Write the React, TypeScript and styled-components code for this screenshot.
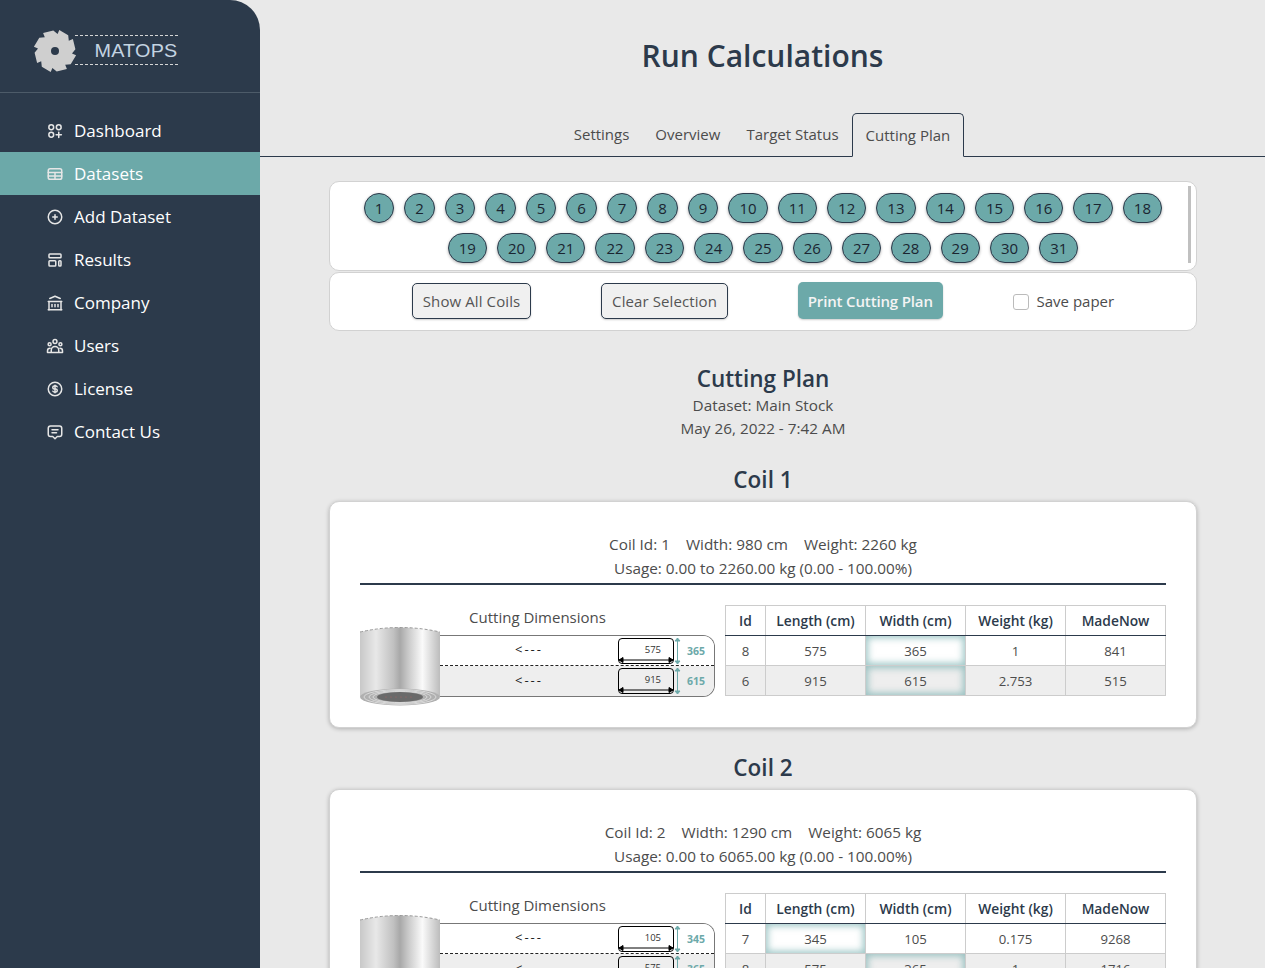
import styled, { createGlobalStyle } from "styled-components";
import { TbBuildingBank, TbCirclePlus, TbCoin, TbMessage2 } from "react-icons/tb";

const navy = "#2c3a4b";
const teal = "#6ca9a9";
const text = "#4c4c4c";

const GlobalStyle = createGlobalStyle`
  html, body {
    margin: 0;
    height: 100%;
    overflow: hidden;
  }
  body {
    background: #e9e9e9;
    font-family: "Open Sans", "Noto Sans", sans-serif;
    font-size: 15px;
    color: ${text};
  }
`;

function bladePath() {
  const cx = 22;
  const cy = 22;
  const teeth = 8;
  let d = "";
  for (let i = 0; i < teeth; i++) {
    const a = (i * 2 * Math.PI) / teeth + 0.2;
    const b = a + 0.5;
    const c = a + (2 * Math.PI) / teeth - 0.05;
    const p1 = [cx + 21.5 * Math.cos(a), cy + 21.5 * Math.sin(a)];
    const p2 = [cx + 20.5 * Math.cos(b), cy + 20.5 * Math.sin(b)];
    const p3 = [cx + 17.2 * Math.cos(c), cy + 17.2 * Math.sin(c)];
    d += `${i === 0 ? "M" : "L"}${p1[0].toFixed(1)} ${p1[1].toFixed(1)}L${p2[0].toFixed(1)} ${p2[1].toFixed(1)}L${p3[0].toFixed(1)} ${p3[1].toFixed(1)}`;
  }
  return d + "Z";
}

const iconProps = {
  width: 18,
  height: 18,
  viewBox: "0 0 24 24",
  fill: "none",
  stroke: "currentColor",
  strokeWidth: 2,
  strokeLinecap: "round" as const,
  strokeLinejoin: "round" as const,
};

function AppsIcon() {
  return (
    <svg {...iconProps}>
      <circle cx="7" cy="7" r="3.2" />
      <circle cx="17" cy="7" r="3.2" />
      <circle cx="7" cy="17" r="3.2" />
      <path d="M17 13.5v7M13.5 17h7" />
    </svg>
  );
}

function TableIcon() {
  return (
    <svg {...iconProps}>
      <rect x="3" y="5" width="18" height="14" rx="2.5" />
      <path d="M3 10h18M3 14.5h18M12 10v9" />
    </svg>
  );
}

function LayoutIcon() {
  return (
    <svg {...iconProps}>
      <rect x="4" y="4" width="16" height="5" rx="1" />
      <rect x="4" y="13" width="9" height="7" rx="1" />
      <rect x="17" y="13" width="3" height="7" rx="1" />
    </svg>
  );
}

function UsersIcon() {
  return (
    <svg {...iconProps}>
      <circle cx="12" cy="6" r="2.6" />
      <circle cx="4.8" cy="9.5" r="2" />
      <circle cx="19.2" cy="9.5" r="2" />
      <path d="M7 20.5v-3a5 5 0 0 1 10 0v3M2 20.5v-2a3.4 3.4 0 0 1 3.4-3.4M22 20.5v-2a3.4 3.4 0 0 0-3.4-3.4M2 20.5h20" />
    </svg>
  );
}

const navItems = [
  { label: "Dashboard", icon: <AppsIcon /> },
  { label: "Datasets", icon: <TableIcon />, active: true },
  { label: "Add Dataset", icon: <TbCirclePlus size={18} /> },
  { label: "Results", icon: <LayoutIcon /> },
  { label: "Company", icon: <TbBuildingBank size={18} /> },
  { label: "Users", icon: <UsersIcon /> },
  { label: "License", icon: <TbCoin size={18} /> },
  { label: "Contact Us", icon: <TbMessage2 size={18} /> },
];

const tabs = ["Settings", "Overview", "Target Status", "Cutting Plan"];
const coilNumbers = Array.from({ length: 31 }, (_, i) => i + 1);

const coils = [
  {
    id: 1,
    width: 980,
    weight: 2260,
    usage: "Usage: 0.00 to 2260.00 kg (0.00 - 100.00%)",
    rows: [
      { id: 8, length: 575, width: 365, weight: "1", made: 841, mark: "width" },
      { id: 6, length: 915, width: 615, weight: "2.753", made: 515, mark: "width" },
    ],
    cuts: [
      { top: 575, side: 365 },
      { top: 915, side: 615 },
    ],
  },
  {
    id: 2,
    width: 1290,
    weight: 6065,
    usage: "Usage: 0.00 to 6065.00 kg (0.00 - 100.00%)",
    rows: [
      { id: 7, length: 345, width: 105, weight: "0.175", made: 9268, mark: "length" },
      { id: 8, length: 575, width: 365, weight: "1", made: 1716, mark: "width" },
    ],
    cuts: [
      { top: 105, side: 345 },
      { top: 575, side: 365 },
    ],
  },
];

function Roll({ id }: { id: number }) {
  const dots = [386, 391, 396, 401, 406, 411];
  return (
    <RollSvg viewBox="360 627 80 80" width="80" height="80">
      <defs>
        <linearGradient id={`roll-${id}`} x1="0" x2="1" y1="0" y2="0">
          <stop offset="0" stopColor="#c8c8c8" />
          <stop offset="0.2" stopColor="#e8e8e8" />
          <stop offset="0.42" stopColor="#c0c0c0" />
          <stop offset="0.5" stopColor="#a8a8a8" />
          <stop offset="0.6" stopColor="#c8c8c8" />
          <stop offset="0.78" stopColor="#fafafa" />
          <stop offset="1" stopColor="#bcbcbc" />
        </linearGradient>
      </defs>
      <path d="M360 632Q400 623 440 632V697H360Z" fill={`url(#roll-${id})`} />
      <path d="M360 632Q400 623 440 632" fill="none" stroke="#999" strokeDasharray="3 2" />
      <ellipse cx="400" cy="697" rx="40" ry="8.5" fill="#b0b0b0" />
      <ellipse cx="400" cy="697" rx="36" ry="7.4" fill="none" stroke="#dadada" />
      <ellipse cx="400" cy="697" rx="31" ry="6.4" fill="none" stroke="#dadada" />
      <ellipse cx="400" cy="697" rx="27" ry="5.6" fill="none" stroke="#dadada" />
      <ellipse cx="400" cy="697" rx="23" ry="5" fill="#6a6a6a" />
      {dots.map((x) => (
        <circle key={x} cx={x} cy="697" r="0.6" fill="#a66" />
      ))}
    </RollSvg>
  );
}

function CutPiece({ top, side }: { top: number; side: number }) {
  return (
    <>
      <Piece>
        <PieceSize>{top}</PieceSize>
        <WidthArrow viewBox="0 0 56 6" width="56" height="6">
          <path d="M1 3H55M1 3l4-2.5v5ZM55 3l-4-2.5v5Z" stroke="#000" fill="#000" />
        </WidthArrow>
      </Piece>
      <svg viewBox="0 0 7 28" width="7" height="28">
        <path d="M3.5 1V27M3.5 1L1 4h5ZM3.5 27L1 24h5Z" stroke={teal} fill={teal} />
      </svg>
      <SideSize>{side}</SideSize>
    </>
  );
}

export default function App() {
  return (
    <Page>
      <GlobalStyle />
      <Sidebar>
        <LogoBar>
          <svg viewBox="0 0 44 44" width="44" height="44">
            <path d={bladePath()} fill="#cfcfcf" />
            <circle cx="22" cy="22" r="4" fill={navy} />
          </svg>
          <LogoText>
            <LogoWord>MATOPS</LogoWord>
          </LogoText>
        </LogoBar>
        <Nav>
          {navItems.map((item) => (
            <NavItem key={item.label} $active={item.active}>
              <NavIcon>{item.icon}</NavIcon>
              {item.label}
            </NavItem>
          ))}
        </Nav>
      </Sidebar>
      <Main>
        <Title>Run Calculations</Title>
        <TabBar>
          {tabs.map((tab) => (
            <Tab key={tab} $active={tab === "Cutting Plan"}>
              {tab}
            </Tab>
          ))}
        </TabBar>
        <Content>
          <CoilPicker>
            {coilNumbers.map((n) => (
              <CoilBubble key={n} $wide={n > 9}>
                {n}
              </CoilBubble>
            ))}
            <ScrollThumb />
          </CoilPicker>
          <Actions>
            <OutlineButton>Show All Coils</OutlineButton>
            <OutlineButton>Clear Selection</OutlineButton>
            <PrintButton>Print Cutting Plan</PrintButton>
            <SaveLabel>
              <CheckBox />
              Save paper
            </SaveLabel>
          </Actions>
          <PlanHead>
            <PlanTitle>Cutting Plan</PlanTitle>
            <PlanLine>Dataset: Main Stock</PlanLine>
            <PlanLine>May 26, 2022 - 7:42 AM</PlanLine>
          </PlanHead>
          {coils.map((coil) => (
            <section key={coil.id}>
              <CoilTitle>Coil {coil.id}</CoilTitle>
              <CoilCard>
                <CoilInfo>
                  <div>
                    <InfoPart>Coil Id: {coil.id}</InfoPart>
                    <InfoPart>Width: {coil.width} cm</InfoPart>
                    <InfoPart>Weight: {coil.weight} kg</InfoPart>
                  </div>
                  <div>{coil.usage}</div>
                </CoilInfo>
                <CoilBody>
                  <Diagram>
                    <DiagramLabel>Cutting Dimensions</DiagramLabel>
                    <DiagramRow>
                      <Roll id={coil.id} />
                      <Strip>
                        {coil.cuts.map((cut, i) => (
                          <StripRow key={i} $shaded={i % 2 === 1}>
                            <Direction>{"<---"}</Direction>
                            <CutPiece top={cut.top} side={cut.side} />
                          </StripRow>
                        ))}
                      </Strip>
                    </DiagramRow>
                  </Diagram>
                  <Table>
                    <thead>
                      <tr>
                        <Th $w={40}>Id</Th>
                        <Th $w={100}>Length (cm)</Th>
                        <Th $w={100}>Width (cm)</Th>
                        <Th $w={100}>Weight (kg)</Th>
                        <Th $w={100}>MadeNow</Th>
                      </tr>
                    </thead>
                    <tbody>
                      {coil.rows.map((row, i) => (
                        <tr key={i}>
                          <Td $shaded={i % 2 === 1}>{row.id}</Td>
                          <Td $shaded={i % 2 === 1} $mark={row.mark === "length"}>
                            {row.length}
                          </Td>
                          <Td $shaded={i % 2 === 1} $mark={row.mark === "width"}>
                            {row.width}
                          </Td>
                          <Td $shaded={i % 2 === 1}>{row.weight}</Td>
                          <Td $shaded={i % 2 === 1}>{row.made}</Td>
                        </tr>
                      ))}
                    </tbody>
                  </Table>
                </CoilBody>
              </CoilCard>
            </section>
          ))}
        </Content>
      </Main>
    </Page>
  );
}

const Page = styled.div`
  display: flex;
  height: 100vh;
  overflow: hidden;
`;

const Sidebar = styled.aside`
  flex: 0 0 260px;
  background: ${navy};
  border-top-right-radius: 30px;
`;

const LogoBar = styled.div`
  display: flex;
  align-items: center;
  height: 93px;
  padding: 9px 0 0 33px;
  box-sizing: border-box;
  border-bottom: 1px solid #4d5b69;
`;

const LogoText = styled.div`
  width: 103px;
  height: 28px;
  margin: -2px 0 0 -2px;
  border-top: 1px dashed #d6d6d6;
  border-bottom: 1px dashed #d6d6d6;
  text-align: right;
  font-family: "Liberation Sans", Arial, sans-serif;
  font-size: 18px;
  line-height: 30px;
  color: #c4d4e2;
`;

const LogoWord = styled.span`
  display: inline-block;
  letter-spacing: 0.2px;
  transform: scaleX(1.1);
  transform-origin: right center;
`;

const Nav = styled.nav`
  display: flex;
  flex-direction: column;
  padding-top: 16px;
`;

const NavItem = styled.div<{ $active?: boolean }>`
  display: flex;
  align-items: center;
  height: 43px;
  padding-left: 46px;
  font-size: 17px;
  color: #fff;
  background: ${(p) => (p.$active ? teal : "transparent")};
`;

const NavIcon = styled.span`
  display: flex;
  width: 18px;
  margin-right: 10px;
  color: #e6e6e6;
`;

const Main = styled.main`
  flex: 1;
  min-width: 0;
`;

const Title = styled.h1`
  margin: 36px 0 37px;
  font-size: 30px;
  line-height: 40px;
  font-weight: 600;
  text-align: center;
  color: ${navy};
`;

const TabBar = styled.div`
  display: flex;
  justify-content: center;
  align-items: flex-end;
  height: 43px;
  border-bottom: 1px solid ${navy};
`;

const Tab = styled.div<{ $active?: boolean }>`
  position: relative;
  top: 1px;
  height: 42px;
  padding: 0 ${(p) => (p.$active ? "13px" : "12px")};
  border: 1px solid ${(p) => (p.$active ? navy : "transparent")};
  border-bottom: 1px solid ${(p) => (p.$active ? "#e9e9e9" : "transparent")};
  border-radius: 5px 5px 0 0;
  line-height: ${(p) => (p.$active ? "42px" : "41px")};
`;

const Content = styled.div`
  width: 868px;
  margin: 24px 0 0 69px;
`;

const Panel = styled.div`
  background: #fff;
  border: 1px solid #d2d2d2;
  border-radius: 10px;
  box-sizing: border-box;
`;

const CoilPicker = styled(Panel)`
  position: relative;
  display: flex;
  flex-wrap: wrap;
  align-content: flex-start;
  justify-content: center;
  gap: 10px;
  height: 90px;
  padding: 11px 30px 0;
`;

const CoilBubble = styled.div<{ $wide?: boolean }>`
  display: flex;
  align-items: center;
  justify-content: center;
  width: ${(p) => (p.$wide ? "39.3px" : "30.5px")};
  height: 30px;
  box-sizing: border-box;
  background: ${teal};
  border: 1px solid ${navy};
  border-radius: 15px;
  box-shadow: 0 1px 3px rgba(0, 0, 0, 0.3);
  color: #1b2531;
`;

const ScrollThumb = styled.div`
  position: absolute;
  top: 4px;
  right: 5px;
  bottom: 7px;
  width: 3px;
  background: #c0c0c0;
`;

const Actions = styled(Panel)`
  display: flex;
  align-items: center;
  justify-content: space-evenly;
  height: 59px;
  margin-top: 1px;
  padding: 0 12px 2px;
`;

const OutlineButton = styled.button`
  height: 36px;
  padding: 0 10px;
  font: inherit;
  letter-spacing: 0.1px;
  color: #555;
  background: #f0f0f0;
  border: 1px solid ${navy};
  border-radius: 5px;
  box-shadow: 0 1px 2px rgba(0, 0, 0, 0.2);
`;

const PrintButton = styled.button`
  height: 37px;
  padding: 0 10px;
  font: inherit;
  font-weight: 600;
  letter-spacing: -0.15px;
  color: #f4f4f4;
  background: ${teal};
  border: 0;
  border-radius: 5px;
  box-shadow: 0 1px 2px rgba(0, 0, 0, 0.2);
`;

const SaveLabel = styled.label`
  display: flex;
  align-items: center;
  gap: 8px;
`;

const CheckBox = styled.span`
  width: 16px;
  height: 16px;
  box-sizing: border-box;
  border: 1px solid #bbb;
  border-radius: 3px;
  margin-top: 2px;
`;

const PlanHead = styled.div`
  margin-top: 33px;
  text-align: center;
`;

const PlanTitle = styled.h2`
  margin: 0;
  font-size: 22.5px;
  line-height: 30px;
  font-weight: 600;
  color: ${navy};
`;

const PlanLine = styled.div`
  font-size: 15.3px;
  line-height: 23px;
`;

const CoilTitle = styled.h2`
  margin: 25px 0 6px;
  font-size: 22.5px;
  line-height: 30px;
  font-weight: 600;
  text-align: center;
  color: ${navy};
`;

const CoilCard = styled(Panel)`
  height: 227px;
  margin-bottom: 1px;
  padding: 30px 30px 0;
  box-shadow: 0 1px 4px rgba(0, 0, 0, 0.25);
`;

const CoilInfo = styled.div`
  padding-bottom: 3px;
  border-bottom: 2px solid ${navy};
  font-size: 15.3px;
  line-height: 24px;
  text-align: center;
`;

const InfoPart = styled.span`
  margin: 0 8px;
`;

const CoilBody = styled.div`
  display: flex;
  align-items: flex-start;
  gap: 10px;
  margin-top: 20px;
`;

const Diagram = styled.div`
  flex: none;
  width: 355px;
`;

const DiagramLabel = styled.div`
  padding-top: 2px;
  line-height: 20px;
  text-align: center;
`;

const DiagramRow = styled.div`
  display: flex;
  align-items: flex-start;
`;

const RollSvg = styled.svg`
  flex: none;
`;

const Strip = styled.div`
  flex: 1;
  margin-top: 8px;
  height: 62px;
  box-sizing: border-box;
  overflow: hidden;
  border: 1px solid #777;
  border-left: 0;
  border-radius: 0 12px 12px 0;
`;

const StripRow = styled.div<{ $shaded?: boolean }>`
  display: flex;
  align-items: center;
  height: 30px;
  box-sizing: border-box;
  background: ${(p) => (p.$shaded ? "#eee" : "#fff")};
  border-bottom: ${(p) => (p.$shaded ? "0" : "1px dashed #222")};
`;

const Direction = styled.span`
  width: 178px;
  padding-bottom: 3px;
  text-align: center;
  font-size: 13px;
  letter-spacing: 2px;
  color: #222;
`;

const Piece = styled.div`
  position: relative;
  flex: none;
  width: 56px;
  height: 26px;
  box-sizing: border-box;
  border: 1.5px solid #000;
  border-radius: 4px;
  text-align: center;
`;

const PieceSize = styled.span`
  position: absolute;
  top: 4px;
  right: 12px;
  font-size: 9.5px;
  line-height: 14px;
  color: #333;
`;

const WidthArrow = styled.svg`
  position: absolute;
  left: -1px;
  bottom: 0;
`;

const SideSize = styled.span`
  margin-left: 6px;
  font-size: 10.5px;
  font-weight: 700;
  color: ${teal};
`;

const Table = styled.table`
  flex: none;
  width: 441px;
  table-layout: fixed;
  border-collapse: collapse;
  font-size: 13.2px;
`;

const Th = styled.th<{ $w: number }>`
  width: ${(p) => p.$w - 1}px;
  height: 29px;
  padding: 0;
  font-size: 13.8px;
  font-weight: 600;
  white-space: nowrap;
  color: ${navy};
  border: 1px solid #ccc;
  border-bottom: 1px solid ${navy};
`;

const Td = styled.td<{ $shaded?: boolean; $mark?: boolean }>`
  height: 29px;
  padding: 0;
  text-align: center;
  background: ${(p) => (p.$shaded ? "#eee" : "#fff")};
  border: 1px solid #ccc;
  box-shadow: ${(p) =>
    p.$mark ? "inset 0 0 7px 2px rgba(108, 169, 169, 0.65)" : "none"};
`;
